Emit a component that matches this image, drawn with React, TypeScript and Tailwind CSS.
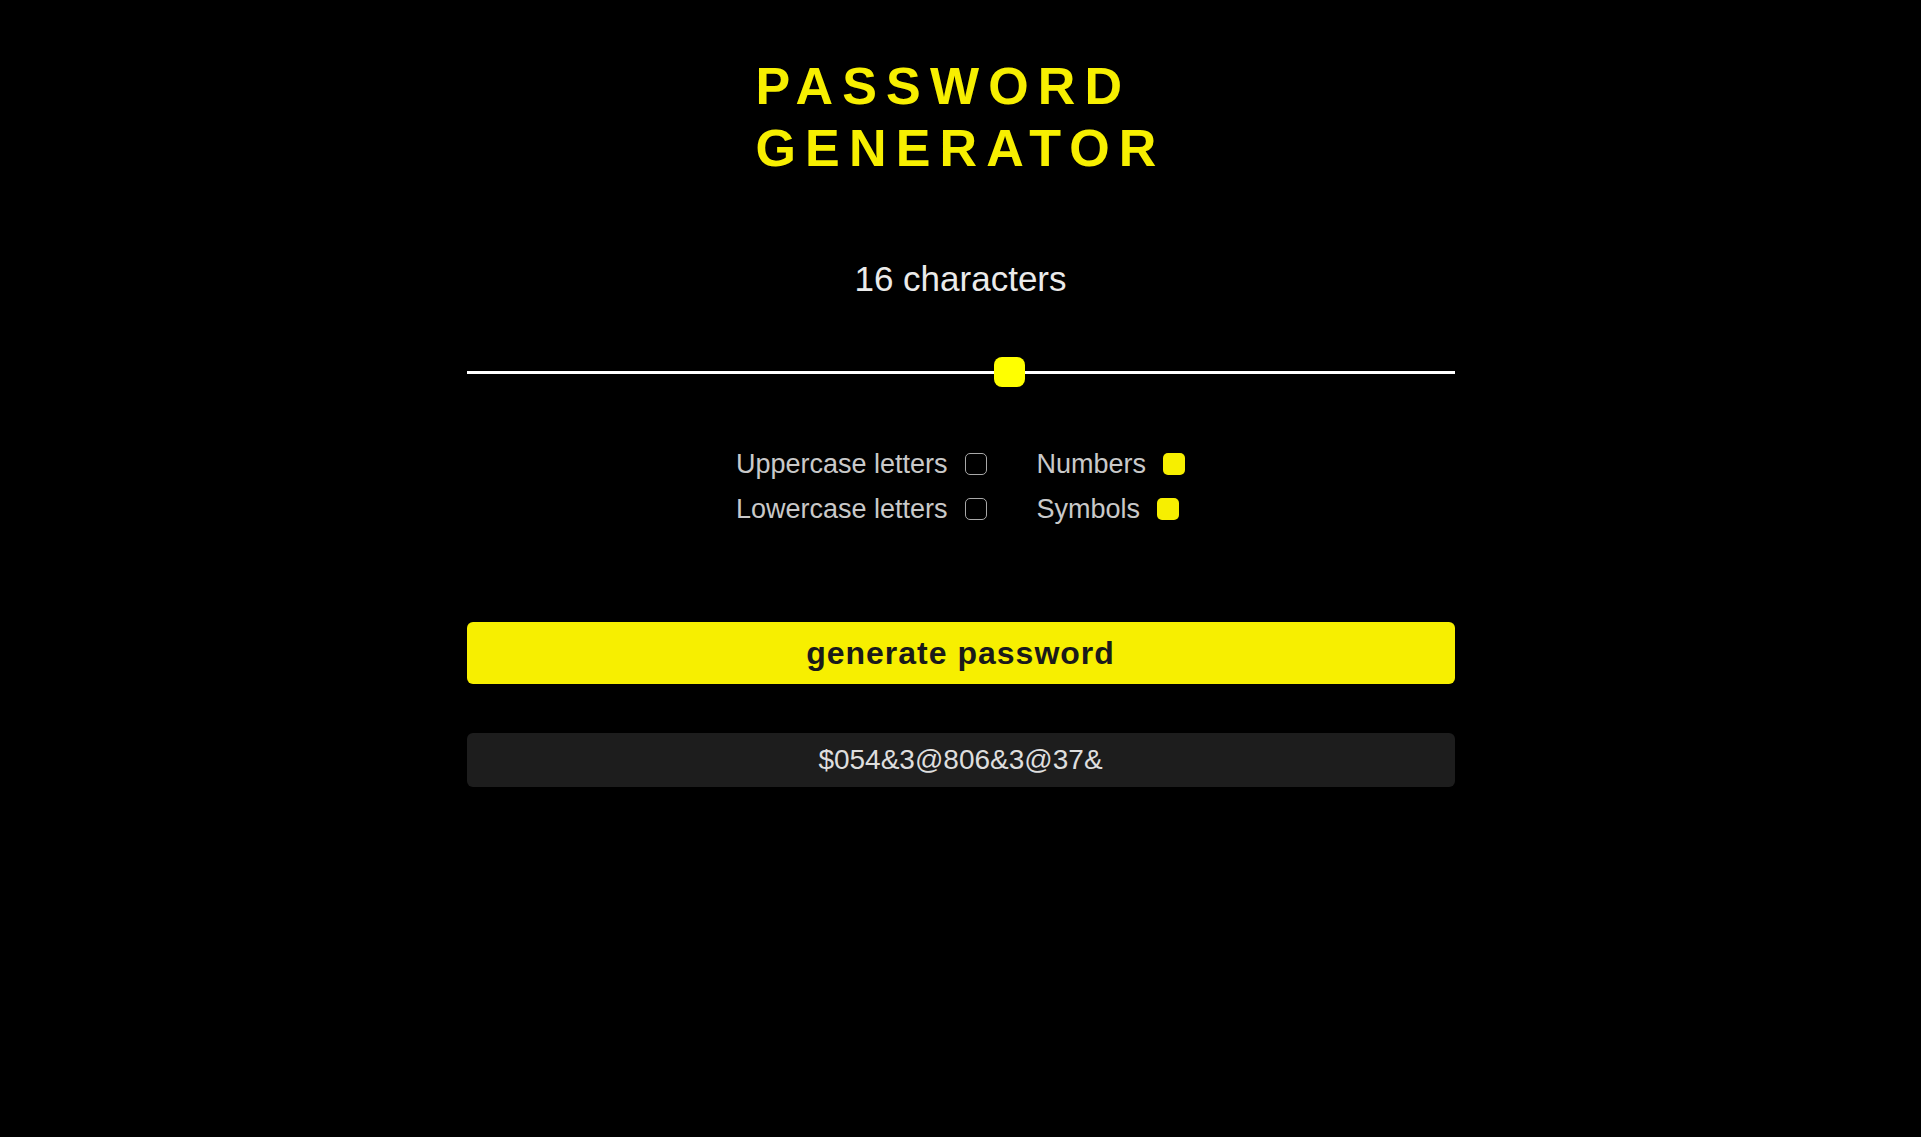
import React from "react";

const body = { fontFamily: '"Liberation Sans", Arial, sans-serif' };

function Box({ checked }: { checked: boolean }) {
  return checked ? (
    <span className="block w-[22px] h-[22px] rounded-[5px] bg-[#f7ef00]" />
  ) : (
    <span className="block w-[22px] h-[22px] rounded-[5px] border-[1.5px] border-[#a8a8a8]" />
  );
}

function Option({ label, checked }: { label: string; checked: boolean }) {
  return (
    <label className="flex items-center gap-[17px] h-[32px] text-[27px] leading-[34px] text-[#c9c9c9]">
      <span>{label}</span>
      <Box checked={checked} />
    </label>
  );
}

export default function App() {
  return (
    <div className="min-h-[1137px] w-full bg-black flex flex-col items-center pt-[55px]" style={body}>
      <h1 className="text-[52px] leading-[62px] font-bold tracking-[9.2px] text-[#f7ef00] text-left">
        <span className="block">PASSWORD</span>
        <span className="block">GENERATOR</span>
      </h1>

      <div className="mt-[80px] text-[35px] leading-[40px] text-[#ebebeb]">16 characters</div>

      <div className="mt-[58px] relative w-[988px] h-[30px] flex items-center">
        <div className="w-full h-[3px] bg-white" />
        <div className="absolute left-[527px] top-0 w-[31px] h-[30px] rounded-[8px] bg-[#ffff00]" />
      </div>

      <div className="mt-[61px] flex gap-[50px]">
        <div className="flex flex-col gap-[13px]">
          <Option label="Uppercase letters" checked={false} />
          <Option label="Lowercase letters" checked={false} />
        </div>
        <div className="flex flex-col gap-[13px]">
          <Option label="Numbers" checked={true} />
          <Option label="Symbols" checked={true} />
        </div>
      </div>

      <button className="mt-[97px] w-[988px] h-[62px] rounded-[6px] bg-[#f7ef00] text-[#1a1a1a] text-[32px] font-bold tracking-[1px] flex items-center justify-center">
        generate password
      </button>

      <div className="mt-[49px] w-[988px] h-[54px] rounded-[6px] bg-[#1d1d1d] text-[#dedede] text-[28px] flex items-center justify-center">
        $054&amp;3@806&amp;3@37&amp;
      </div>
    </div>
  );
}
